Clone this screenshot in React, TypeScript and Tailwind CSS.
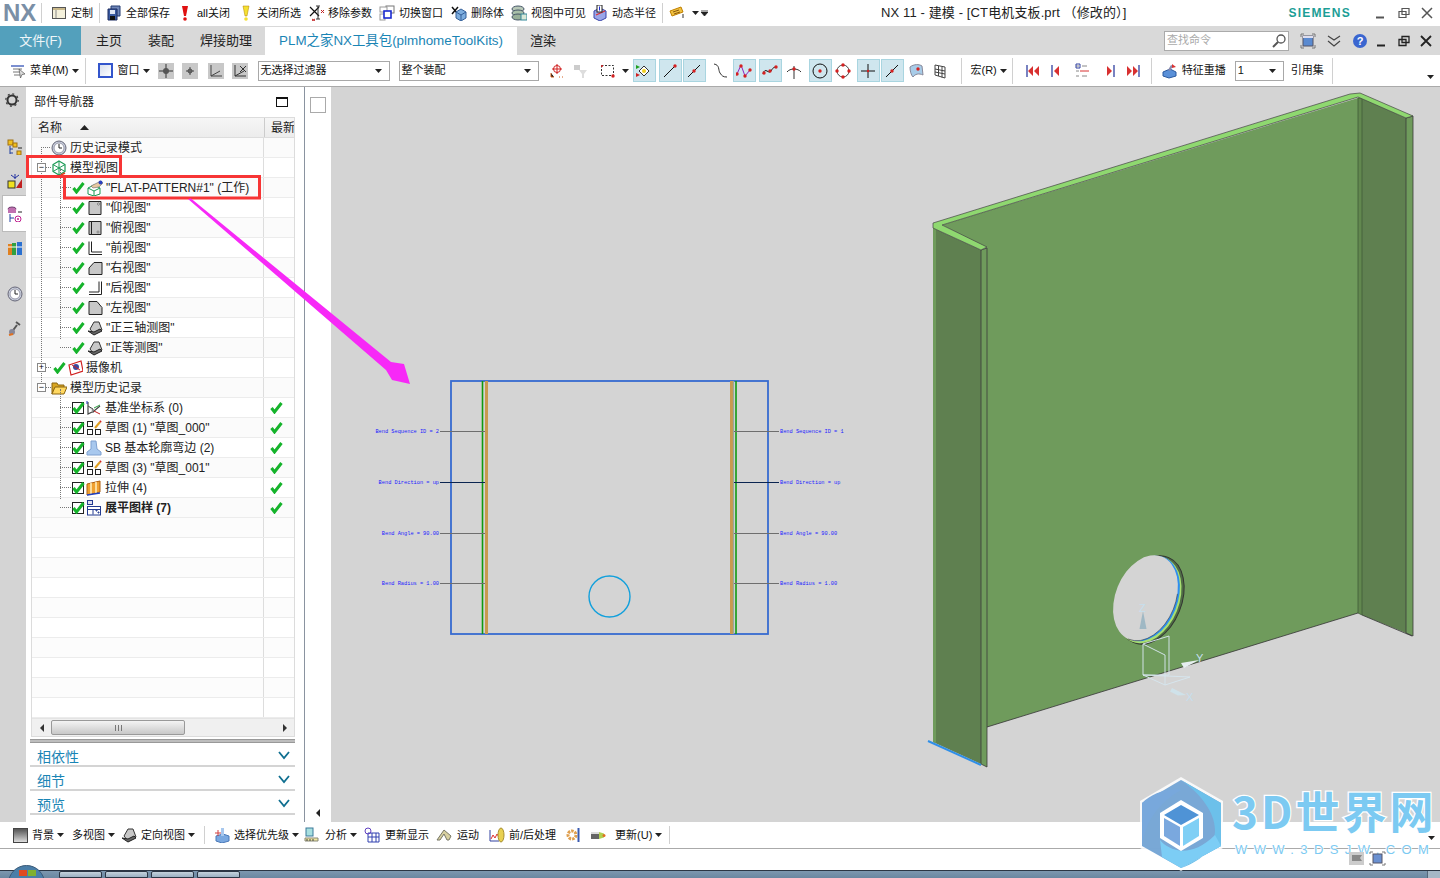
import React from 'react';

const font = "font-['Liberation_Sans','Noto_Sans_CJK_SC',sans-serif]";

function Ic({ children, w = 16, h = 16, className = '' }: { children: React.ReactNode; w?: number; h?: number; className?: string }) {
  return (
    <svg width={w} height={h} viewBox={`0 0 ${w} ${h}`} className={`shrink-0 ${className}`}>
      {children}
    </svg>
  );
}

const Caret = ({ className = '' }: { className?: string }) => (
  <Ic w={7} h={4} className={className}>
    <path d="M0 0h7L3.5 4z" fill="#222" />
  </Ic>
);

const Sep = ({ className = '' }: { className?: string }) => <div className={`w-px h-[26px] bg-[#d0d0d0] shrink-0 ${className}`} />;

const Check = ({ className = '' }: { className?: string }) => (
  <Ic w={13} h={13} className={className}>
    <path d="M1.5 7l3 4L11.5 2" fill="none" stroke="#15b32b" strokeWidth="3" />
  </Ic>
);

/* title bar icons */
const WindowIcon = () => (
  <Ic><rect x="1.5" y="2.5" width="13" height="11" fill="#f4f1dc" stroke="#555" /><rect x="2" y="3" width="12" height="2" fill="#c9b88a" /><path d="M5 5v8" stroke="#888" /></Ic>
);
const SaveAllIcon = () => (
  <Ic><path d="M5 1h9v10H5z" fill="#6f86b8" stroke="#223a70" /><path d="M2 4h9v11H2z" fill="#3a5aa0" stroke="#1a2a60" /><rect x="4" y="5" width="5" height="4" fill="#dfe6f5" /><rect x="4" y="11" width="5" height="4" fill="#111" /></Ic>
);
const ExclaimIcon = ({ color }: { color: string }) => (
  <Ic w={10} h={16}><path d="M2 1h6L6 11H4z" fill={color} stroke="#b08000" strokeWidth={color === '#e01010' ? 0 : 0.5} /><circle cx="5" cy="14" r="1.8" fill={color} /></Ic>
);
const RemoveParamIcon = () => (
  <Ic><path d="M1 2l9 9M10 2l-9 9" stroke="#111" strokeWidth="1.2" /><path d="M7 1h4M9 1v13M7 14h4" stroke="#333" /><path d="M12 5l3 3m0-3l-3 3M3 14l3 2m0-2l-3 2" stroke="#c02020" /></Ic>
);
const SwitchWinIcon = () => (
  <Ic><rect x="7" y="1" width="8" height="7" fill="#fff" stroke="#777" /><rect x="1" y="2" width="7" height="5" fill="#fff" stroke="#999" /><rect x="1" y="9" width="5" height="6" fill="#fff" stroke="#999" /><rect x="5" y="6" width="7" height="7" fill="#fff" stroke="#1a2ad0" strokeWidth="1.6" /></Ic>
);
const DeleteBodyIcon = () => (
  <Ic><path d="M1 2l6 7M7 2L1 9" stroke="#111" strokeWidth="1.5" /><path d="M5 7l5-3 5 3v6l-5 3-5-3z" fill="#7eaedf" stroke="#35609a" /><path d="M5 7l5 3 5-3M10 10v6" stroke="#35609a" fill="none" /></Ic>
);
const LayersIcon = () => (
  <Ic><ellipse cx="7" cy="4" rx="6" ry="3" fill="#b8c8b8" stroke="#456" /><ellipse cx="7" cy="8" rx="6" ry="3" fill="#a8bfa8" stroke="#456" /><ellipse cx="7" cy="12" rx="6" ry="3" fill="#98b098" stroke="#456" /><rect x="10" y="9" width="6" height="6" fill="#d8e8d8" stroke="#389" /></Ic>
);
const RadiusIcon = () => (
  <Ic><path d="M2 6l6-3 6 3v7l-6 3-6-3z" fill="#9aa6e8" stroke="#3a44a8" /><path d="M4 10l9-4" stroke="#e03030" strokeWidth="1.3" /><rect x="5" y="0" width="5" height="7" fill="#fff" stroke="#222" /><path d="M7.5 1.5v4" stroke="#2030d0" /></Ic>
);
const TicketIcon = ({ className = '' }: { className?: string }) => (
  <Ic className={className}><path d="M1 6l11-4 2 5-11 4z" fill="#f0c040" stroke="#c08000" /><path d="M4 7l6-2M5 9l6-2" stroke="#8a5a10" /><path d="M14 9v4" stroke="#333" /></Ic>
);

/* toolbar icons */
const MenuIcon = () => (
  <Ic><path d="M1 3h13" stroke="#7b8fd0" strokeWidth="2" /><path d="M3 6h9M3 9h7M4 12h6" stroke="#777" /><path d="M9 6l6 5-3 .5L10.500 15z" fill="#ddd" stroke="#555" strokeWidth=".7" /></Ic>
);
const GrayBtn = ({ children }: { children: React.ReactNode }) => (
  <Ic><rect width="16" height="16" fill="#c8c8c8" />{children}</Ic>
);
const Sel = ({ children, className = '' }: { children: React.ReactNode; className?: string }) => (
  <div className={`w-[23px] h-[23px] bg-[#cfe6ee] border border-[#a9d5e0] flex items-center justify-center shrink-0 ${className}`}>{children}</div>
);
const Dot = ({ x, y, r = 1.7 }: { x: number; y: number; r?: number }) => <circle cx={x} cy={y} r={r} fill="#d42020" />;

const Cell = ({ children }: { children: React.ReactNode }) => <Ic>{children}</Ic>;

/* tree icons */
const ClockIcon = () => (
  <Ic><circle cx="8" cy="8" r="7" fill="#c8cedc" stroke="#667" /><circle cx="8" cy="8" r="5" fill="#fff" stroke="#99a" /><path d="M8 4v4h3" stroke="#222" fill="none" /></Ic>
);
const CubeGreen = () => (
  <Ic><path d="M8 1l6 3.500v7L8 15l-6-3.500v-7z" fill="none" stroke="#1b9a55" strokeWidth="1.2" /><path d="M2 4.500l6 3.500 6-3.500M8 8v7M8 1v7M2 11.500L8 8l6 3.500" fill="none" stroke="#1b9a55" /><path d="M10 15l4-2" stroke="#e04020" strokeWidth="1.500" /></Ic>
);
const WorkViewIcon = () => (
  <Ic><path d="M1 8l6-3 6 3v6l-6 2-6-2z" fill="#fff" stroke="#1b9a55" /><path d="M1 8l6 3 6-3M7 11v5" stroke="#1b9a55" fill="none" /><path d="M4 6l6-3 4-2 2 2-4 4-6 1z" fill="#e8c8a0" stroke="#666" strokeWidth=".6" /><circle cx="13.500" cy="2.500" r="2" fill="#2a40c0" /></Ic>
);
const Views: Record<string, React.ReactNode> = {
  bottom: <g><path d="M2 1.500h12v13H2z" fill="#c8c8c8" stroke="#222" /><circle cx="11.500" cy="4" r="1" fill="#fff" stroke="#222" strokeWidth=".5" /></g>,
  top: <g><path d="M2 1.500h12v13H2z" fill="#c8c8c8" stroke="#222" /><path d="M4.500 1.500v13" stroke="#222" /><circle cx="11" cy="12" r="1" fill="#fff" stroke="#222" strokeWidth=".5" /></g>,
  front: <path d="M2 1.500v13h13M4.500 1.500v10.500H15" fill="none" stroke="#222" />,
  right: <path d="M2 14.500h13V2.500H7L2 8z" fill="#c8c8c8" stroke="#222" />,
  back: <path d="M14.500 1.500v13H2M12 1.500V12H2" fill="none" stroke="#222" />,
  left: <path d="M2 1.500h8l5 6v7H2z" fill="#c8c8c8" stroke="#222" />,
  iso: <g><path d="M3 9l4-7h5l3 8-8 4z" fill="#c8c8c8" stroke="#333" /><path d="M1 11l6 4 8-4-2-2-6 3z" fill="#666" stroke="#222" /></g>,
};
const CameraIcon = () => (
  <Ic w={15}><path d="M1 5l12-4 2 10-12 4z" fill="#fff" stroke="#d02020" strokeWidth="1.200" /><circle cx="8" cy="7" r="3" fill="#3a4aa0" /><path d="M4 5l8 5" stroke="#d02020" /></Ic>
);
const FolderIcon = () => (
  <Ic w={16}><path d="M1 14V3h5l1 2h6v3H4z" fill="#d8a520" stroke="#8a6510" /><path d="M1 14l3-7h12l-3 7z" fill="#ffd860" stroke="#8a6510" /></Ic>
);
const BoxCheck = () => (
  <div className="w-[12px] h-[12px] border border-[#222] bg-white flex items-center justify-center shrink-0">
    <Check />
  </div>
);
const CsysIcon = () => (
  <Ic><path d="M2 2v12l6-3 6-5" fill="none" stroke="#444" strokeWidth="1.200" /><path d="M2 6l5 3v4" fill="#ddd" stroke="#444" /><path d="M8 8l6-3" stroke="#2a9a40" /><path d="M8 11l6 3" stroke="#c02020" /><path d="M1 1v3" stroke="#2030c0" /></Ic>
);
const SketchIcon = () => (
  <Ic><rect x="1.500" y="1.500" width="5" height="5" fill="#fff" stroke="#222" /><rect x="1.500" y="9.500" width="5" height="5" fill="#fff" stroke="#222" /><rect x="9.500" y="9.500" width="5" height="5" fill="#fff" stroke="#222" /><path d="M9 8l5-6" stroke="#e0a020" strokeWidth="2" /><path d="M14 2l1-1" stroke="#d02020" strokeWidth="2" /></Ic>
);
const FlangeIcon = () => (
  <Ic><path d="M5 1h5l1 8 4 3v3H1v-3l4-3z" fill="#a8c8ee" stroke="#7fa0d0" /></Ic>
);
const ExtrudeIcon = () => (
  <Ic><path d="M1 4l13-3v11L1 15z" fill="#f0a030" stroke="#b06010" /><path d="M5 3v12M10 2v11" stroke="#fff0c0" strokeWidth="1.500" /><path d="M1 15l13-2" stroke="#2040c0" strokeWidth="1.500" /></Ic>
);
const FlatIcon = () => (
  <Ic><rect x="1.500" y="0.500" width="5" height="4" fill="#dde" stroke="#223a90" /><rect x="1.500" y="6.500" width="13" height="8.500" fill="#fff" stroke="#223a90" /><path d="M1 9.500h6v5M7 9.500h8M10 10h1v1h-1zM12 12h1v1h-1z" fill="none" stroke="#223a90" /></Ic>
);

type RowKind = { label: string; pl: number; icon?: React.ReactNode; stub?: 'a' | 'b'; expand?: string; check?: 'plain' | 'box'; right?: boolean; bold?: boolean };

const rows: RowKind[] = [
  { label: '历史记录模式', pl: 19, icon: <ClockIcon />, stub: 'a' },
  { label: '模型视图', pl: 19, icon: <CubeGreen />, expand: '−' },
  { label: '"FLAT-PATTERN#1" (工作)', pl: 40, check: 'plain', icon: <WorkViewIcon />, stub: 'b' },
  { label: '"仰视图"', pl: 40, check: 'plain', icon: <Ic>{Views.bottom}</Ic>, stub: 'b' },
  { label: '"俯视图"', pl: 40, check: 'plain', icon: <Ic>{Views.top}</Ic>, stub: 'b' },
  { label: '"前视图"', pl: 40, check: 'plain', icon: <Ic>{Views.front}</Ic>, stub: 'b' },
  { label: '"右视图"', pl: 40, check: 'plain', icon: <Ic>{Views.right}</Ic>, stub: 'b' },
  { label: '"后视图"', pl: 40, check: 'plain', icon: <Ic>{Views.back}</Ic>, stub: 'b' },
  { label: '"左视图"', pl: 40, check: 'plain', icon: <Ic>{Views.left}</Ic>, stub: 'b' },
  { label: '"正三轴测图"', pl: 40, check: 'plain', icon: <Ic>{Views.iso}</Ic>, stub: 'b' },
  { label: '"正等测图"', pl: 40, check: 'plain', icon: <Ic>{Views.iso}</Ic>, stub: 'b' },
  { label: '摄像机', pl: 21, check: 'plain', icon: <CameraIcon />, expand: '+' },
  { label: '模型历史记录', pl: 19, icon: <FolderIcon />, expand: '−' },
  { label: '基准坐标系 (0)', pl: 40, check: 'box', icon: <CsysIcon />, stub: 'b', right: true },
  { label: '草图 (1) "草图_000"', pl: 40, check: 'box', icon: <SketchIcon />, stub: 'b', right: true },
  { label: 'SB 基本轮廓弯边 (2)', pl: 40, check: 'box', icon: <FlangeIcon />, stub: 'b', right: true },
  { label: '草图 (3) "草图_001"', pl: 40, check: 'box', icon: <SketchIcon />, stub: 'b', right: true },
  { label: '拉伸 (4)', pl: 40, check: 'box', icon: <ExtrudeIcon />, stub: 'b', right: true },
  { label: '展平图样 (7)', pl: 40, check: 'box', icon: <FlatIcon />, stub: 'b', right: true, bold: true },
];

function TreeRow({ row, index }: { row: RowKind; index: number }) {
  const stripe = index % 2 === 0 ? 'bg-[#fbfbfb]' : 'bg-white';
  return (
    <div className={`flex h-5 border-b border-[#ececec] ${stripe}`}>
      <div className="relative w-[232px] flex items-center" style={{ paddingLeft: row.pl }}>
        {row.stub === 'a' && <div className="absolute left-[9px] top-[9px] w-[9px] border-t border-dotted border-[#777]" />}
        {row.stub === 'b' && <div className="absolute left-[28px] top-[9px] w-[11px] border-t border-dotted border-[#777]" />}
        {row.expand && (
          <div className="absolute left-[5px] top-[5px] w-[9px] h-[9px] border border-[#888] bg-white flex items-center justify-center text-[9px] leading-none text-black z-10">
            {row.expand}
          </div>
        )}
        {row.expand && <div className="absolute left-[14px] top-[9px] w-[5px] border-t border-dotted border-[#777]" />}
        {row.check === 'plain' && <Check className="mr-[2px]" />}
        {row.check === 'box' && <div className="mr-[2px]"><BoxCheck /></div>}
        {row.icon}
        <span className={`ml-[3px] whitespace-nowrap text-[12px] text-[#222] ${row.bold ? 'font-bold' : ''}`}>{row.label}</span>
      </div>
      <div className="w-[31px] border-l border-[#ddd] flex items-center pl-[6px]">{row.right && <Check />}</div>
    </div>
  );
}

function EmptyRow({ index }: { index: number }) {
  return (
    <div className={`flex h-5 border-b border-[#ececec] ${index % 2 === 0 ? 'bg-[#fcfcfc]' : 'bg-white'}`}>
      <div className="w-[232px]" />
      <div className="w-[31px] border-l border-[#ddd]" />
    </div>
  );
}

function Accordion({ label }: { label: string }) {
  return (
    <div className="h-6 border-b-2 border-[#d4d4d4] flex items-center justify-between pl-[7px] pr-[5px] pt-[7px]">
      <span className="text-[14px] text-[#1a85b5]">{label}</span>
      <Ic w={12} h={9} className="mb-[5px]">
        <path d="M1 1l5 6 5-6" fill="none" stroke="#0f6f90" strokeWidth="1.800" />
      </Ic>
    </div>
  );
}

function Tool({ icon, label, className = '' }: { icon?: React.ReactNode; label: React.ReactNode; className?: string }) {
  return (
    <div className={`flex items-center gap-[5px] shrink-0 ${className}`}>
      {icon}
      <span className="text-[11px] text-[#111] whitespace-nowrap">{label}</span>
    </div>
  );
}

function TitleBar() {
  return (
    <div className="h-[26px] bg-white flex items-center shrink-0">
      <span className="ml-[3px] w-[34px] text-[24px] leading-none font-bold text-[#7a8fa6] font-['Liberation_Sans']">NX</span>
      <Sep className="ml-[4px] !h-[20px]" />
      <Tool className="ml-[9px] !gap-[4px]" icon={<WindowIcon />} label="定制" />
      <Sep className="ml-[6px] !h-[20px]" />
      <Tool className="ml-[6px] !gap-[4px]" icon={<SaveAllIcon />} label="全部保存" />
      <Tool className="ml-[10px] !gap-[7px]" icon={<ExclaimIcon color="#e01010" />} label="all关闭" />
      <Tool className="ml-[11px] !gap-[6px]" icon={<ExclaimIcon color="#f5e030" />} label="关闭所选" />
      <Tool className="ml-[8px] !gap-[3px]" icon={<RemoveParamIcon />} label="移除参数" />
      <Tool className="ml-[7px] !gap-[4px]" icon={<SwitchWinIcon />} label="切换窗口" />
      <Tool className="ml-[8px] !gap-[4px]" icon={<DeleteBodyIcon />} label="删除体" />
      <Tool className="ml-[7px] !gap-[4px]" icon={<LayersIcon />} label="视图中可见" />
      <Tool className="ml-[6px] !gap-[4px]" icon={<RadiusIcon />} label="动态半径" />
      <Sep className="ml-[6px] !h-[20px]" />
      <TicketIcon className="ml-[6px]" />
      <Caret className="ml-[7px]" />
      <Ic w={7} h={6} className="ml-[2px]"><path d="M0 0h7M0 2h7l-3.500 4z" fill="#222" stroke="#222" strokeWidth=".8" /></Ic>
      <span className="ml-[173px] text-[13px] tracking-[.12px] text-[#222] whitespace-nowrap">NX 11 - 建模 - [CT电机支板.prt （修改的）]</span>
      <span className="ml-[162px] text-[12px] font-bold text-[#1b9e96] tracking-[1.200px] font-['Liberation_Sans']">SIEMENS</span>
      <div className="ml-[24px] flex items-center gap-[11px]">
        <Ic w={12} h={12}><path d="M1 10.500h8" stroke="#555" strokeWidth="2" /></Ic>
        <Ic w={12} h={12}><path d="M4 1.500h7v6H4zM1 4.500h7v6H1z" fill="#fff" stroke="#555" strokeWidth="1.200" /></Ic>
        <Ic w={12} h={12}><path d="M1 1l10 10M11 1L1 11" stroke="#555" strokeWidth="1.500" /></Ic>
      </div>
    </div>
  );
}

function TabsBar() {
  return (
    <div className="h-[29px] bg-[#d9d9d9] flex items-center shrink-0 text-[13px] text-[#222]">
      <div className="w-[81px] h-full bg-[#53a0bc] text-white/90 flex items-center justify-center">文件(F)</div>
      <span className="ml-[15px]">主页</span>
      <span className="ml-[26px]">装配</span>
      <span className="ml-[26px]">焊接助理</span>
      <div className="ml-[13px] w-[252px] h-[28px] mt-px bg-white text-[#1a85b5] text-[13.400px] flex items-center justify-center whitespace-nowrap">PLM之家NX工具包(plmhomeToolKits)</div>
      <span className="ml-[13px]">渲染</span>
      <div className="ml-[608px] w-[125px] h-[20px] bg-white border border-[#aaa] flex items-center justify-between pl-[2px] pr-[1px]">
        <span className="text-[11px] text-[#aaa]">查找命令</span>
        <Ic><circle cx="10" cy="6" r="4" fill="#fff" stroke="#555" strokeWidth="1.300" /><path d="M7 9l-5 5" stroke="#555" strokeWidth="2" /></Ic>
      </div>
      <Ic className="ml-[11px]"><path d="M1 4V1h3M12 1h3v3M15 12v3h-3M4 15H1v-3" fill="none" stroke="#777" /><rect x="3" y="3" width="10" height="10" fill="#5a8ad0" stroke="#556" /><rect x="3" y="3" width="10" height="2" fill="#dde" /></Ic>
      <Ic className="ml-[10px]"><path d="M2 3l6 4 6-4M2 8l6 5 6-5" fill="none" stroke="#444" strokeWidth="1.200" /></Ic>
      <Ic className="ml-[10px]"><circle cx="8" cy="8" r="7" fill="#3a66d0" /><text x="8" y="12" fontSize="11" fontWeight="bold" textAnchor="middle" fill="#fff" fontFamily="Liberation Sans">?</text></Ic>
      <div className="ml-[8px] flex items-center gap-[10px]">
        <Ic w={12} h={12}><path d="M1 10.500h8" stroke="#222" strokeWidth="2" /></Ic>
        <Ic w={12} h={12}><path d="M4 1.500h7v6H4zM1 4.500h7v6H1z" fill="#d9d9d9" stroke="#222" strokeWidth="1.300" /></Ic>
        <Ic w={12} h={12}><path d="M1 1l10 10M11 1L1 11" stroke="#222" strokeWidth="1.800" /></Ic>
      </div>
    </div>
  );
}

function Combo({ label, className }: { label: string; className: string }) {
  return (
    <div className={`h-[20px] bg-white border border-[#a8a8a8] flex items-center justify-between pl-[2px] pr-[7px] shrink-0 ${className}`}>
      <span className="text-[11px] text-[#111] whitespace-nowrap">{label}</span>
      <Caret />
    </div>
  );
}

function MainToolbar() {
  return (
    <div className="h-[32px] bg-white flex items-center shrink-0 border-b border-[#aaa]">
      <Tool className="ml-[10px] !gap-[4px]" icon={<MenuIcon />} label="菜单(M)" />
      <Caret className="ml-[3px]" />
      <Sep className="ml-[6px]" />
      <div className="ml-[12px] w-[15px] h-[15px] border-2 border-[#3355cc] bg-gradient-to-br from-[#d8dfee] to-white shrink-0" />
      <Tool className="ml-[5px]" label="窗口" />
      <Caret className="ml-[3px]" />
      <div className="ml-[8px]"><GrayBtn><path d="M8 1v14M1 8h14" stroke="#333" /><circle cx="8" cy="8" r="3" fill="#555" /></GrayBtn></div>
      <div className="ml-[8px]"><GrayBtn><path d="M8 4v8M4 8h8" stroke="#444" /><circle cx="8" cy="8" r="2" fill="none" stroke="#444" /></GrayBtn></div>
      <div className="ml-[10px]"><GrayBtn><path d="M3 2v11h11M3 13l9-5" fill="none" stroke="#444" /></GrayBtn></div>
      <div className="ml-[8px]"><GrayBtn><path d="M3 2v11h11M3 13l9-5M8 3l6 6M14 3L8 9" fill="none" stroke="#333" /></GrayBtn></div>
      <Combo label="无选择过滤器" className="ml-[10px] w-[132px]" />
      <Combo label="整个装配" className="ml-[9px] w-[140px]" />
      <Ic className="ml-[10px]"><circle cx="8" cy="6" r="3.500" fill="none" stroke="#d02020" /><path d="M8 1v10M3 6h10" stroke="#d02020" /><path d="M2 10v4h3M10 14h1M13 14h1" stroke="#d06020" /></Ic>
      <Ic className="ml-[7px]"><path d="M2 2h6v5H2z" fill="#ccc" /><path d="M7 7h8l-3 4v4h-2v-4z" fill="#ddd" /></Ic>
      <Ic className="ml-[12px]"><rect x="1.500" y="2.500" width="12" height="10" fill="none" stroke="#333" strokeDasharray="2 1.500" /><Dot x={13} y={13} /><Dot x={2} y={3} r={1} /></Ic>
      <Caret className="ml-[6px]" />
      <Sel className="ml-[4px]">
        <Cell><path d="M3 8l5-5 5 5-5 5z" fill="#fff" stroke="#333" /><circle cx="8" cy="8" r="2" fill="#f0d020" /><path d="M0 2l4 2-4 2z" fill="#20a020" /><path d="M0 10l4 2-4 2z" fill="#d02020" /></Cell>
      </Sel>
      <Sel className="ml-[3px]"><Cell><path d="M2 14L14 2" stroke="#111" /><Dot x={13} y={3} /></Cell></Sel>
      <Sel className="ml-px"><Cell><path d="M2 14L14 2" stroke="#111" /><Dot x={8} y={8} /></Cell></Sel>
      <Ic className="ml-[6px]"><path d="M2 1c6 1 4 6 6 9s3 4 7 4" fill="none" stroke="#333" /></Ic>
      <Sel className="ml-[5px]"><Cell><path d="M1 11l4-9 4 11 5-6" fill="none" stroke="#9020c0" /><Dot x={5} y={3} /><Dot x={1} y={11} /><Dot x={9} y={13} /><Dot x={14} y={7} /></Cell></Sel>
      <Sel className="ml-[3px]"><Cell><path d="M1 11c2-8 6 1 8-3s4-4 6-4" fill="none" stroke="#111" /><Dot x={2} y={10} /><Dot x={8} y={8} /><Dot x={14} y={4} /></Cell></Sel>
      <Ic className="ml-[4px]"><path d="M1 9c3-4 11-4 14 0M8 3v13" fill="none" stroke="#333" /><Dot x={8} y={6} /></Ic>
      <Sel className="ml-[7px]"><Cell><circle cx="8" cy="8" r="7" fill="none" stroke="#111" /><Dot x={8} y={8} /></Cell></Sel>
      <Ic className="ml-[3px]"><circle cx="8" cy="8" r="6" fill="none" stroke="#444" /><Dot x={8} y={2} /><Dot x={2} y={8} /><Dot x={14} y={8} /><Dot x={8} y={14} /></Ic>
      <Sel className="ml-[6px]"><Cell><path d="M8 1v14M1 8h14" stroke="#111" /><Dot x={8} y={8} r={1.2} /></Cell></Sel>
      <Sel className="ml-px"><Cell><path d="M2 14L14 2" stroke="#111" /><Dot x={8} y={8} /></Cell></Sel>
      <Ic className="ml-[5px]"><path d="M1 4c4-3 9-3 12-1l1 9c-4-2-8-1-10 2C2 12 1 8 1 4z" fill="#a8cce8" stroke="#889" /><Dot x={9} y={6} /></Ic>
      <Ic className="ml-[8px]"><path d="M2 2l10 2v11L2 12zM5.500 3v10M9 3.500v11M2 6l10 2M2 9l10 2" fill="none" stroke="#444" /></Ic>
      <Sep className="ml-[12px]" />
      <Tool className="ml-[9px]" label="宏(R)" />
      <Caret className="ml-[3px]" />
      <Sep className="ml-[5px]" />
      <Ic w={14} className="ml-[13px]"><path d="M1 2v12" stroke="#3040a0" strokeWidth="1.300" /><path d="M7 3v10L2 8zM13 3v10L8 8z" fill="#d83030" /></Ic>
      <Ic w={8} className="ml-[11px]"><path d="M1 2v12" stroke="#3040a0" strokeWidth="1.300" /><path d="M8 3v10L3 8z" fill="#d83030" /></Ic>
      <Ic w={14} className="ml-[16px]"><path d="M1 3h3M1 8h3M1 13h3M7 3h5M7 13h5" stroke="#888" /><path d="M5 8h9" stroke="#d83030" /><path d="M1 1h4v4H1z" fill="none" stroke="#3040a0" /></Ic>
      <Ic w={8} className="ml-[18px]"><path d="M7 2v12" stroke="#3040a0" strokeWidth="1.300" /><path d="M0 3v10l5-5z" fill="#d83030" /></Ic>
      <Ic w={14} className="ml-[11px]"><path d="M13 2v12" stroke="#3040a0" strokeWidth="1.300" /><path d="M1 3v10l5-5zM7 3v10l5-5z" fill="#d83030" /></Ic>
      <Sep className="ml-[11px]" />
      <Tool className="ml-[10px] !gap-[4px]" icon={<Ic><path d="M1 9l7-3 6 3v4l-7 2-6-2z" fill="#5a90d8" stroke="#2a5aa0" /><path d="M6 7l3-5 2 1-3 5" fill="#88a" /><path d="M10 1l4 3-4 1z" fill="#d83030" /></Ic>} label="特征重播" />
      <Combo label="1" className="ml-[9px] w-[49px]" />
      <Tool className="ml-[7px]" label="引用集" />
      <Sep className="ml-[8px]" />
      <Caret className="ml-[94px] mt-[13px]" />
    </div>
  );
}

function LeftRail() {
  return (
    <div className="w-[26px] bg-[#d4d4d4] flex flex-col items-center shrink-0 pt-[6px]">
      <Ic w={14} h={14} className="mr-[3px]"><circle cx="7" cy="7" r="4.500" fill="none" stroke="#333" strokeWidth="2" /><circle cx="7" cy="7" r="6.200" fill="none" stroke="#333" strokeWidth="1.200" strokeDasharray="2 2.800" /></Ic>
      <Ic className="mt-[32px] ml-[3px]"><rect x="1" y="1" width="5" height="5" fill="#f0c020" stroke="#a07010" /><rect x="6" y="4" width="4" height="4" fill="#f0c020" stroke="#a07010" /><path d="M3 7v8M3 10h3M3 14h3" stroke="#2040a0" /><path d="M11 9h4" stroke="#222" /><rect x="10" y="12" width="4" height="4" fill="#f0c020" stroke="#a07010" /></Ic>
      <Ic className="mt-[18px] ml-[3px]"><path d="M8 1v5M4 2l4 3 4-3" stroke="#2030a0" fill="none" /><rect x="1" y="8" width="7" height="7" fill="#f0e020" stroke="#333" /><path d="M9 15l6-9v9z" fill="#c02020" /></Ic>
      <div className="mt-[6px] self-end w-[24px] h-[37px] bg-white border border-r-0 border-[#bbb] flex items-center justify-center">
        <Ic><ellipse cx="5" cy="3" rx="4" ry="2" fill="#c070b0" stroke="#704070" /><rect x="1" y="3" width="8" height="4" fill="#c070b0" /><path d="M3 8v8M3 12h4" stroke="#2040a0" /><path d="M11 6h4" stroke="#222" /><circle cx="11" cy="13" r="3" fill="none" stroke="#c02090" /><circle cx="11" cy="13" r="1" fill="#c02090" /></Ic>
      </div>
      <Ic className="mt-[8px] ml-[3px]"><rect x="1" y="4" width="4" height="11" fill="#e08020" /><rect x="5" y="3" width="4" height="12" fill="#30a040" /><rect x="10" y="2" width="5" height="13" fill="#2a70d0" /><path d="M1 7h14" stroke="#fff" /></Ic>
      <Ic className="mt-[30px] ml-[3px]"><circle cx="8" cy="8" r="7" fill="#c8cedc" stroke="#667" /><circle cx="8" cy="8" r="5" fill="#fff" stroke="#99a" /><path d="M8 4v4h3" stroke="#222" fill="none" /></Ic>
      <Ic className="mt-[18px] ml-[3px]"><path d="M4 13l6-8M9 2l4 3" stroke="#555" strokeWidth="2" /><circle cx="5" cy="12" r="3" fill="#889" /><path d="M2 15l4-1" stroke="#e07020" strokeWidth="2" /></Ic>
    </div>
  );
}

function Navigator() {
  return (
    <div className="w-[278px] bg-white flex flex-col shrink-0 relative">
      <div className="h-[30px] flex items-center justify-between pl-[8px] pr-[16px]">
        <span className="text-[12px] text-[#222]">部件导航器</span>
        <div className="w-[12px] h-[10px] border border-[#111] border-t-2 bg-white" />
      </div>
      <div className="ml-[5px] w-[264px] h-[620px] border border-[#dcdcdc] flex flex-col">
        <div className="h-[20px] bg-gradient-to-b from-[#f6f6f6] to-[#ececec] border-b border-[#ddd] flex items-center text-[12px] text-[#222] shrink-0">
          <div className="w-[232px] pl-[6px] flex items-center">
            名称
            <Ic w={9} h={5} className="ml-[18px]"><path d="M0 5h9L4.500 0z" fill="#222" /></Ic>
          </div>
          <div className="w-[30px] border-l border-[#ccc] h-full pl-[6px] overflow-hidden whitespace-nowrap leading-[20px]">最新</div>
        </div>
        <div className="relative flex-1 overflow-hidden">
          <div className="absolute left-[9px] top-[9px] h-[241px] border-l border-dotted border-[#777] z-[1]" />
          <div className="absolute left-[28px] top-[31px] h-[170px] border-l border-dotted border-[#777] z-[1]" />
          <div className="absolute left-[28px] top-[251px] h-[110px] border-l border-dotted border-[#777] z-[1]" />
          {rows.map((row, i) => (
            <TreeRow key={row.label + i} row={row} index={i} />
          ))}
          {Array.from({ length: 10 }).map((_, i) => (
            <EmptyRow key={i} index={i} />
          ))}
        </div>
        <div className="h-[18px] bg-[#f0f0f0] flex items-center relative shrink-0 border-t border-[#e4e4e4]">
          <Ic w={5} h={8} className="ml-[7px]"><path d="M5 0v8L1 4z" fill="#333" /></Ic>
          <div className="ml-[7px] w-[134px] h-[15px] rounded-[2px] border border-[#999] bg-gradient-to-b from-[#f4f4f4] to-[#c8c8c8] flex items-center justify-center">
            <div className="w-[7px] h-[6px] border-x border-[#777] flex justify-center"><div className="w-px h-full bg-[#777]" /></div>
          </div>
          <Ic w={5} h={8} className="ml-auto mr-[6px]"><path d="M0 0v8l4-4z" fill="#333" /></Ic>
        </div>
      </div>
      <div className="mt-[2px] ml-[4px] w-[265px] h-[4px] bg-[#bdbdbd] border-y border-[#999]" />
      <div className="ml-[4px] w-[265px]">
        <Accordion label="相依性" />
        <Accordion label="细节" />
        <Accordion label="预览" />
      </div>
    </div>
  );
}

function BendLabels({ side }: { side: 'left' | 'right' }) {
  const ys = [431, 482, 533, 583];
  const leftText = ['Bend Sequence ID = 2', 'Bend Direction = up', 'Bend Angle = 90.00', 'Bend Radius = 1.00'];
  const rightText = ['Bend Sequence ID = 1', 'Bend Direction = up', 'Bend Angle = 90.00', 'Bend Radius = 1.00'];
  return (
    <g fontFamily="Liberation Mono" fontSize="5.300" fill="#1a22ff">
      {ys.map((y, i) => (
        <g key={y}>
          {side === 'left' ? (
            <>
              <path d={`M440 ${y}.5H485`} stroke={i === 1 ? '#0a2450' : '#6e6e6e'} />
              <text x="439" y={y + 2} textAnchor="end">{leftText[i]}</text>
            </>
          ) : (
            <>
              <path d={`M734 ${y}.5H779`} stroke={i === 1 ? '#0a2450' : '#6e6e6e'} />
              <text x="780" y={y + 2}>{rightText[i]}</text>
            </>
          )}
        </g>
      ))}
    </g>
  );
}

function Viewport() {
  return (
    <div className="flex-1 bg-[#d4d4d4] relative">
      <svg viewBox="331 87 1109 735" className="block w-full h-full">
        {/* flat pattern view */}
        <rect x="451" y="381" width="317" height="253" fill="none" stroke="#376bd0" strokeWidth="1.800" />
        <path d="M482.500 381v253" stroke="#0f9a10" strokeWidth="1.600" />
        <path d="M486.500 381v253" stroke="#c89a50" strokeWidth="3" />
        <path d="M731.500 381v253" stroke="#c89a50" strokeWidth="3" />
        <path d="M733.500 381v253" stroke="#9aa89a" strokeWidth="1.200" />
        <path d="M736 381v253" stroke="#0f9a10" strokeWidth="1.600" />
        <circle cx="609.500" cy="596.500" r="20.500" fill="none" stroke="#12a0dc" strokeWidth="1.400" />
        <BendLabels side="left" />
        <BendLabels side="right" />

        {/* sheet metal part */}
        <polygon points="942,225 1358,98 1358,613 987,727 987,248" fill="#6f9b5c" />
        <polygon points="933,228 981,250 981,764 933,742" fill="#5f8050" />
        <polygon points="933,228 936,229 936,743 933,742" fill="#6f9b5c" />
        <polygon points="981,250 987,248 987,767 981,764" fill="#6f9b5c" stroke="#3a3a3a" strokeWidth=".8" />
        <polygon points="1362,98 1406,118 1406,633 1362,615" fill="#5f8050" />
        <polygon points="1358,98 1362,98 1362,615 1358,613" fill="#62884f" stroke="#3f5a38" strokeWidth=".8" />
        <polygon points="1406,118 1413,116 1413,636 1406,633" fill="#6f9b5c" stroke="#3a3a3a" strokeWidth=".8" />
        <polygon points="933,223 1350,94 1360,93 1413,116 1406,118 1358,97 942,225 987,247 981,250 933,228" fill="#8fd870" stroke="#444" strokeWidth=".7" />
        <path d="M987 727L1358 613M1362 615L1412 636" stroke="#333" strokeWidth=".8" fill="none" />
        <path d="M928 741L981 765" stroke="#2f8fe8" strokeWidth="2" />

        {/* hole through the web */}
        <ellipse cx="1151" cy="600" rx="30.500" ry="46" transform="rotate(22 1151 600)" fill="#4f6d45" stroke="#333" strokeWidth="1" />
        <ellipse cx="1149" cy="600" rx="30" ry="45" transform="rotate(22 1149 600)" fill="#a8e070" />
        <ellipse cx="1147.500" cy="598.500" rx="30" ry="44.500" transform="rotate(22 1147.500 598.500)" fill="#2e8ef0" />
        <ellipse cx="1145.500" cy="598" rx="30" ry="44.500" transform="rotate(22 1145.500 598)" fill="#d4d4d4" stroke="#333" strokeWidth=".5" strokeDasharray="60 160" />

        {/* csys handle */}
        <g stroke="#d6e6ee" strokeWidth="1" fill="none" opacity=".95">
          <path d="M1143 644L1169 636V675L1143 675ZM1143 644L1165 655V685M1143 675L1190 677L1165 685Z" />
        </g>
        <path d="M1143 611l-3.500 18h7z" fill="#9fb8c4" />
        <path d="M1199 660l-18 3 3 5z" fill="#e6eef0" />
        <path d="M1172 688l14 7-8 .5-8-4z" fill="#cfe2ea" />
        <g fontFamily="Liberation Sans" fontSize="11" fill="#c6dfee">
          <text x="1139" y="612">Z</text>
          <text x="1196" y="662">Y</text>
          <text x="1186" y="701">X</text>
        </g>
      </svg>
    </div>
  );
}

function BottomBar() {
  return (
    <div className="h-[27px] bg-white flex items-center shrink-0 border-b border-[#aaa]">
      <div className="ml-[13px] w-[15px] h-[15px] border border-[#444] bg-gradient-to-b from-[#555] to-[#ddd] shrink-0" />
      <Tool className="ml-[4px]" label="背景" />
      <Caret className="ml-[3px]" />
      <Tool className="ml-[8px]" label="多视图" />
      <Caret className="ml-[3px]" />
      <Ic className="ml-[6px]">{Views.iso}</Ic>
      <Tool className="ml-[4px]" label="定向视图" />
      <Caret className="ml-[3px]" />
      <Sep className="ml-[9px] !h-[18px]" />
      <Tool className="ml-[9px] !gap-[4px]" icon={<Ic><path d="M2 9l7-2 6 2v5l-7 2-6-2z" fill="#7aa8e0" stroke="#4a78b8" /><path d="M7 1h3v8H7z" fill="#a8c8ee" /><path d="M1 6h6M4 3v6" stroke="#d04040" /></Ic>} label="选择优先级" />
      <Caret className="ml-[3px]" />
      <Tool className="ml-[5px] !gap-[5px]" icon={<Ic><rect x="2" y="1" width="7" height="8" fill="#a8e0e0" stroke="#3a7a9a" /><path d="M1 11h13v3H1z" fill="#f0e8a0" stroke="#887" /><path d="M3 12v2M6 12v2M9 12v2" stroke="#444" /></Ic>} label="分析" />
      <Caret className="ml-[3px]" />
      <Tool className="ml-[7px]" icon={<Ic><path d="M4 6h11v9H4zM4 10h11M8 6v9M12 6v9" fill="#fff" stroke="#3040b0" /><circle cx="4" cy="4" r="3" fill="none" stroke="#6040c0" /></Ic>} label="更新显示" />
      <Tool className="ml-[7px]" icon={<Ic><path d="M1 13L8 3l7 6-2 4H11L8 7l-4 6z" fill="#d8d0a0" stroke="#776" /></Ic>} label="运动" />
      <Tool className="ml-[10px] !gap-[4px]" icon={<Ic><path d="M1 3v11h9" stroke="#3040a0" fill="none" /><path d="M2 12l2-4 2 3 2-4 2 3" stroke="#e03030" fill="none" /><ellipse cx="12" cy="8" rx="3" ry="7" fill="#e8d050" stroke="#a89030" /></Ic>} label="前/后处理" />
      <Ic w={14} className="ml-[10px]"><circle cx="6" cy="8" r="4" fill="none" stroke="#e0a050" strokeWidth="3" strokeDasharray="2.500 1" /><path d="M12.500 1v14" stroke="#3a5ab0" strokeWidth="2" /></Ic>
      <Ic className="ml-[10px]"><rect x="1" y="5" width="8" height="7" fill="#666" /><path d="M9 5l5 1.500v4L9 12z" fill="#b0d050" /><path d="M1 5h8v2H1z" fill="#ddd" /><circle cx="14" cy="8.500" r="1.500" fill="#e07020" /></Ic>
      <Tool className="ml-[9px]" label="更新(U)" />
      <Caret className="ml-[3px]" />
      <Sep className="ml-[7px] !h-[18px]" />
    </div>
  );
}

function Taskbar() {
  const buttons = [0, 1, 2, 3];
  return (
    <div className="h-[8px] shrink-0 bg-gradient-to-b from-[#7c97af] to-[#6a87a0] border-t border-[#2b3644] flex relative">
      <div className="absolute left-[8px] top-[-6px] w-[37px] h-[37px] rounded-full bg-[#4a7ea8] border border-[#3a5a78] overflow-hidden">
        <div className="absolute left-[10px] top-[4px] w-[8px] h-[6px] bg-[#e04a20]" />
        <div className="absolute left-[19px] top-[4px] w-[8px] h-[6px] bg-[#80b030]" />
      </div>
      {buttons.map((b) => (
        <div key={b} className={`w-[43px] rounded-t-[2px] border border-[#2b3644] bg-gradient-to-b from-[#c4d2dc] to-[#9ab0c2] ${b === 0 ? 'ml-[59px]' : 'ml-[3px]'}`} />
      ))}
      <div className="ml-auto w-[13px] bg-[#a5b7c6] border-l border-[#55677a]" />
    </div>
  );
}

function Watermark() {
  return (
    <svg viewBox="1130 770 310 108" className="absolute right-0 bottom-0 w-[310px] h-[108px] pointer-events-none">
      <polygon points="1181,777 1223,801 1223,848 1181,871 1140,848 1140,801" fill="#fff" fillOpacity=".85" />
      <polygon points="1181,780 1221,803 1221,846 1181,868 1142,846 1142,803" fill="#6a9fd2" fillOpacity=".9" />
      <path d="M1181 780L1200 791L1221 803V846L1181 868C1205 860 1215 845 1215 830C1215 812 1200 793 1181 780Z" fill="#6cc0ea" />
      <path d="M1142 846C1145 825 1155 805 1181 790C1165 788 1152 794 1142 803Z" fill="#78a8dc" />
      <path d="M1160 840C1168 850 1190 860 1215 835L1221 846L1181 868L1162 857Z" fill="#7ccdf5" />
      <polygon points="1181,800 1203,813 1203,838 1181,851 1160,838 1160,813" fill="#fff" />
      <polygon points="1181,805 1199,815 1181,825 1164,815" fill="#4f93d6" />
      <polygon points="1164,818 1180,827 1180,846 1164,836" fill="#7aa8de" />
      <polygon points="1183,827 1199,818 1199,836 1183,846" fill="#7fcff5" />
      <text x="1232" y="829" fontFamily="Noto Sans CJK SC" fontWeight="700" fontSize="44" letterSpacing="3" fill="#7ccaf2" stroke="#fff" strokeWidth="2.500" paintOrder="stroke">3D世界网</text>
      <text x="1235" y="854" fontFamily="Liberation Sans" fontSize="13" letterSpacing="6.400" fill="#7ccaf2" stroke="#fff" strokeWidth="1.500" paintOrder="stroke">WWW.3DSJW.COM</text>
      <rect x="1349" y="852" width="15" height="13" fill="#ccc" />
      <path d="M1352 855h10l-2 3 2 3h-10z" fill="#888" />
      <path d="M1370 854v-2h3M1382 852h3v2M1385 863v2h-3M1373 865h-3v-2" fill="none" stroke="#777" />
      <rect x="1373" y="854" width="9" height="9" fill="#6a90d0" stroke="#556" />
      <path d="M1428 836h7l-3.500 4z" fill="#222" />
    </svg>
  );
}

function Annotations() {
  return (
    <svg viewBox="0 0 1440 878" className="absolute inset-0 w-[1440px] h-[878px] pointer-events-none z-10">
      <rect x="27.500" y="156.500" width="93" height="20" fill="none" stroke="#f73535" strokeWidth="3" />
      <rect x="64.500" y="176.500" width="195" height="21.500" fill="none" stroke="#f73535" strokeWidth="3" />
      <polygon points="188,199 191,198.500 391,362 404,364 410,384 392,380 386,370" fill="#f729f7" />
    </svg>
  );
}

export default function App() {
  return (
    <div className={`relative w-[1440px] h-[878px] overflow-hidden flex flex-col bg-white ${font}`}>
      <TitleBar />
      <TabsBar />
      <MainToolbar />
      <div className="flex flex-1 min-h-0">
        <LeftRail />
        <Navigator />
        <div className="w-[27px] border-l border-[#8a93a0] bg-white shrink-0 flex flex-col items-center relative">
          <div className="mt-[10px] w-[16px] h-[16px] border border-[#aaa] bg-white" />
          <Ic w={5} h={8} className="mt-auto mb-[5px]"><path d="M4 0v8L0 4z" fill="#222" /></Ic>
        </div>
        <Viewport />
      </div>
      <BottomBar />
      <div className="h-[21px] bg-white shrink-0" />
      <Taskbar />
      <Watermark />
      <Annotations />
    </div>
  );
}
